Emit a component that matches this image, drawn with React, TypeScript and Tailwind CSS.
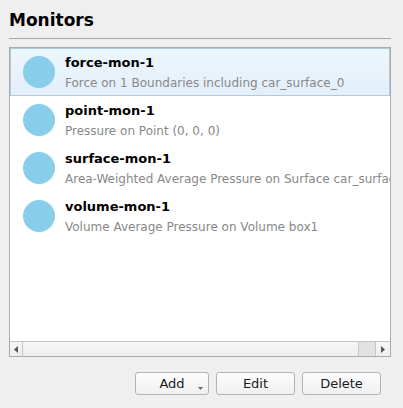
import React from "react";

const items = [
  { name: "force-mon-1", desc: "Force on 1 Boundaries including car_surface_0", selected: true },
  { name: "point-mon-1", desc: "Pressure on Point (0, 0, 0)" },
  { name: "surface-mon-1", desc: "Area-Weighted Average Pressure on Surface car_surface_0" },
  { name: "volume-mon-1", desc: "Volume Average Pressure on Volume box1" },
];

function Btn({ label, w, menu }: { label: string; w: string; menu?: boolean }) {
  return (
    <div
      className={`relative ${w} h-[23px] flex items-center justify-center rounded-[3px] border border-[#b4b4b4] bg-gradient-to-b from-[#fdfdfd] to-[#f0f0f0] text-[13px] text-[#1a1a1a]`}
    >
      {label}
      {menu && (
        <svg className="absolute right-[5px] bottom-[4px]" width="5" height="3" viewBox="0 0 5 3">
          <path d="M0 0h5L2.5 3z" fill="#666" />
        </svg>
      )}
    </div>
  );
}

export default function App() {
  return (
    <div
      className="w-[403px] h-[408px] bg-[#efefef] overflow-hidden"
      style={{ fontFamily: '"DejaVu Sans", "Liberation Sans", sans-serif' }}
    >
      <div className="pl-[9px] pr-[12px]">
        <div className="pt-[9px] h-[38px] text-[17px] leading-[22px] font-bold text-black">Monitors</div>
        <div className="h-px bg-[#a8a8a8]" />
        <div className="mt-[8px] h-[310px] border border-[#ababab] bg-white flex flex-col overflow-hidden">
          <div className="flex-1 overflow-hidden">
            {items.map((it) => (
              <div
                key={it.name}
                className={`h-[48px] flex items-start whitespace-nowrap ${
                  it.selected
                    ? "border border-[#b3c8d8] bg-gradient-to-b from-[#ecf6fd] to-[#e3eff9]"
                    : "border border-transparent"
                }`}
              >
                <div className="ml-[12px] mt-[7px] w-[32px] h-[32px] rounded-full bg-[#88cdea] shrink-0" />
                <div className="ml-[10px] pt-[6px] flex flex-col gap-[4px]">
                  <div className="text-[13px] leading-[16px] font-bold text-black">{it.name}</div>
                  <div className="text-[12px] leading-[16px] text-[#888888]">{it.desc}</div>
                </div>
              </div>
            ))}
          </div>
          <div className="h-[15px] border-t border-[#c4c4c4] flex bg-gradient-to-b from-[#f7f7f7] to-[#ededed]">
            <div className="w-[13px] border-r border-[#c4c4c4] flex items-center justify-center">
              <svg width="4" height="7" viewBox="0 0 4 7">
                <path d="M4 0v7L0 3.5z" fill="#555" />
              </svg>
            </div>
            <div className="flex-1" />
            <div className="w-[18px] border-l border-r border-[#c8c8c8] bg-[#e2e2e2]" />
            <div className="w-[14px] flex items-center justify-center">
              <svg width="4" height="7" viewBox="0 0 4 7">
                <path d="M0 0v7L4 3.5z" fill="#555" />
              </svg>
            </div>
          </div>
        </div>
      </div>
      <div className="mt-[15px] pr-[22px] flex justify-end gap-[7px]">
        <Btn label="Add" w="w-[74px]" menu />
        <Btn label="Edit" w="w-[79px]" />
        <Btn label="Delete" w="w-[79px]" />
      </div>
    </div>
  );
}
